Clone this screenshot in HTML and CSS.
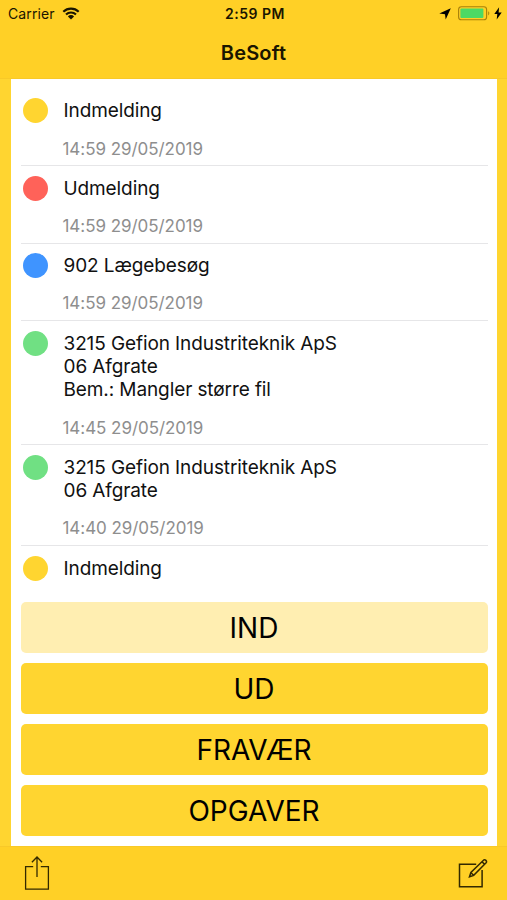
FILE: index.html
```html
<!DOCTYPE html>
<html lang="da">
<head>
    <meta charset="utf-8">
    <title>BeSoft</title>
    <link rel="stylesheet" href="styles.css">
</head>
<body>
    <header class="header">
        <div class="statusbar">
            <div class="carrier">
                <span>Carrier</span>
                <svg class="wifi" width="18" height="13" viewBox="0 0 18 13">
                    <path d="M1.3 4.8a11 11 0 0 1 15.4 0M4 7.6a7.1 7.1 0 0 1 10 0" fill="none" stroke="#1a1500" stroke-width="2.1"/>
                    <path d="M9 12.5 5.9 9.4a4.4 4.4 0 0 1 6.2 0z" fill="#1a1500"/>
                </svg>
            </div>
            <div class="clock">2:59 PM</div>
            <div class="power">
                <svg width="12" height="12" viewBox="0 0 12 12">
                    <path d="M11.8.3 6.7 11.5 6 6.2.3 5.6z" fill="#000"/>
                </svg>
                <svg class="battery" width="32" height="15" viewBox="0 0 32 15">
                    <rect x=".6" y=".8" width="28" height="13" rx="2.8" fill="none" stroke="#a8800a" stroke-width="1.1"/>
                    <rect x="2.4" y="2.6" width="23" height="9.4" rx="1" fill="#4cd964"/>
                    <path d="M30.2 5.2c1.5.7 1.5 3.5 0 4.2z" fill="#a8800a"/>
                </svg>
                <svg class="bolt" width="8" height="13" viewBox="0 0 8 13">
                    <path d="M5.1.3.3 7.1h3L2.7 12.5 7.7 5.6H4.6z" fill="#000"/>
                </svg>
            </div>
        </div>
        <h1>BeSoft</h1>
    </header>

    <main class="content">
        <ul class="log">
            <li>
                <span class="dot yellow"></span>
                <div class="text">Indmelding</div>
                <time>14:59 29/05/2019</time>
            </li>
            <li>
                <span class="dot red"></span>
                <div class="text">Udmelding</div>
                <time>14:59 29/05/2019</time>
            </li>
            <li>
                <span class="dot blue"></span>
                <div class="text">902 Lægebesøg</div>
                <time>14:59 29/05/2019</time>
            </li>
            <li>
                <span class="dot green"></span>
                <div class="text">3215 Gefion Industriteknik ApS<br>06 Afgrate<br>Bem.: Mangler større fil</div>
                <time>14:45 29/05/2019</time>
            </li>
            <li>
                <span class="dot green"></span>
                <div class="text">3215 Gefion Industriteknik ApS<br>06 Afgrate</div>
                <time>14:40 29/05/2019</time>
            </li>
            <li>
                <span class="dot yellow"></span>
                <div class="text">Indmelding</div>
            </li>
        </ul>
        <div class="buttons">
            <button class="disabled">IND</button>
            <button>UD</button>
            <button>FRAVÆR</button>
            <button>OPGAVER</button>
        </div>
    </main>

    <footer class="toolbar">
        <svg width="26" height="36" viewBox="0 0 26 36" fill="none" stroke="#332900" stroke-width="1.3">
            <path d="M9.2 11.7H1.6v22.4h22.8V11.7h-7.6M13 22V2M7.9 7.2 13 2l5.1 5.2"/>
        </svg>
        <svg width="30" height="30" viewBox="0 0 30 30" fill="none" stroke="#332900" stroke-width="1.5">
            <path d="M18.2 6.2H1.5v22.6h22.6V12"/>
            <path d="m11.5 18.8 1.4-4.4L25.5 2.2q1.2-1 2.4.2t.2 2.4L15.7 17.4zM12.9 14.4l2.8 3M24 3.7l2.7 2.7"/>
        </svg>
    </footer>
</body>
</html>
```
FILE: styles.css
```css
* {
    box-sizing: border-box;
}
body {
    margin: 0;
    height: 900px;
    display: flex;
    flex-direction: column;
    overflow: hidden;
    background: #ffd530;
    color: #111;
    font-family: Inter, "Liberation Sans", sans-serif;
}
.header {
    height: 79px;
    background: #ffd026;
    box-shadow: inset 0 -1px #f8c928;
}
.statusbar {
    display: grid;
    grid-template-columns: 1fr auto 1fr;
    align-items: center;
    height: 27px;
    padding: 0 5px 0 8px;
    font-size: 14px;
    color: #1a1500;
}
.carrier {
    display: flex;
    align-items: center;
    gap: 7px;
    letter-spacing: 0.1px;
}
.clock {
    font-weight: 600;
    letter-spacing: 0.5px;
}
.power {
    display: flex;
    align-items: center;
    justify-content: flex-end;
}
.battery {
    margin-left: 7px;
}
.bolt {
    margin-left: 4px;
}
h1 {
    margin: 0;
    font-size: 20px;
    line-height: 52px;
    font-weight: 600;
    letter-spacing: 0.2px;
    text-align: center;
    color: #1a1500;
}
.content {
    flex: 1;
    display: flex;
    flex-direction: column;
    margin: 0 10px 0 11px;
    padding: 10px 9.5px;
    background: #fff;
}
.log {
    flex: 1;
    margin: 0;
    padding: 0;
    list-style: none;
}
.log li {
    display: grid;
    grid-template-columns: 43px 1fr;
    padding: 10.4px 0 5.8px;
    border-bottom: 1px solid #e6e6e8;
}
.log li:last-child {
    border-bottom: none;
}
.dot {
    width: 25px;
    height: 25px;
    margin: -1px 0 -2px 2px;
    border-radius: 50%;
}
.yellow {
    background: #ffd530;
}
.red {
    background: #ff6259;
}
.blue {
    background: #3f94ff;
}
.green {
    background: #70e083;
}
.text {
    font-size: 19px;
    line-height: 23.4px;
    letter-spacing: -0.1px;
}
.log time {
    grid-column: 2;
    margin: 15.8px 0 0 -1px;
    font-size: 17px;
    line-height: 21px;
    letter-spacing: -0.05px;
    color: #8e8e8e;
}
.buttons {
    display: flex;
    flex-direction: column;
    gap: 10px;
}
button {
    height: 51px;
    padding: 0;
    border: none;
    border-radius: 5px;
    background: #ffd530;
    color: #000;
    font-family: inherit;
    font-size: 28px;
}
.disabled {
    background: #ffeeb1;
}
.toolbar {
    display: flex;
    align-items: center;
    justify-content: space-between;
    height: 54px;
    padding: 0 19px 0 24px;
    background: #ffd026;
    box-shadow: inset 0 1px #f8c928;
}
```
